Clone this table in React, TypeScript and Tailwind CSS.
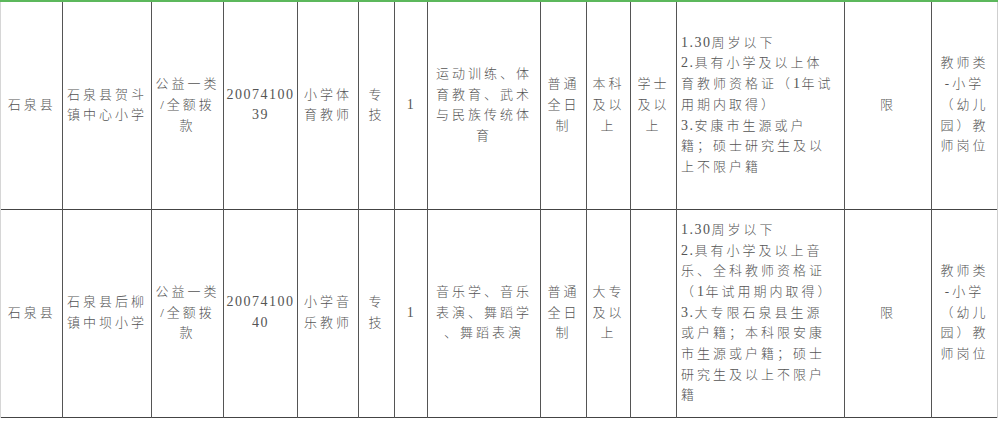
const widths = [61, 89, 72, 74, 61, 36, 33, 113, 46, 44, 46, 168, 87, 66];

type Cell = { lines: string[]; align?: "left" | "center" };

const rows: Cell[][] = [
  [
    { lines: ["石泉县"] },
    { lines: ["石泉县贺斗", "镇中心小学"] },
    { lines: ["公益一类", "/全额拨", "款"] },
    { lines: ["20074100", "39"] },
    { lines: ["小学体", "育教师"] },
    { lines: ["专", "技"] },
    { lines: ["1"] },
    { lines: ["运动训练、体", "育教育、武术", "与民族传统体", "育"] },
    { lines: ["普通", "全日", "制"] },
    { lines: ["本科", "及以", "上"] },
    { lines: ["学士", "及以", "上"] },
    {
      lines: [
        "1.30周岁以下",
        "2.具有小学及以上体",
        "育教师资格证（1年试",
        "用期内取得）",
        "3.安康市生源或户",
        "籍；硕士研究生及以",
        "上不限户籍",
      ],
      align: "left",
    },
    { lines: ["限"] },
    { lines: ["教师类", "-小学", "（幼儿", "园）教", "师岗位"] },
  ],
  [
    { lines: ["石泉县"] },
    { lines: ["石泉县后柳", "镇中坝小学"] },
    { lines: ["公益一类", "/全额拨", "款"] },
    { lines: ["20074100", "40"] },
    { lines: ["小学音", "乐教师"] },
    { lines: ["专", "技"] },
    { lines: ["1"] },
    { lines: ["音乐学、音乐", "表演、舞蹈学", "、舞蹈表演"] },
    { lines: ["普通", "全日", "制"] },
    { lines: ["大专", "及以", "上"] },
    { lines: [] },
    {
      lines: [
        "1.30周岁以下",
        "2.具有小学及以上音",
        "乐、全科教师资格证",
        "（1年试用期内取得）",
        "3.大专限石泉县生源",
        "或户籍；本科限安康",
        "市生源或户籍；硕士",
        "研究生及以上不限户",
        "籍",
      ],
      align: "left",
    },
    { lines: ["限"] },
    { lines: ["教师类", "-小学", "（幼儿", "园）教", "师岗位"] },
  ],
];

// digits and latin get tighter spacing than the CJK glyphs
function Line({ text }: { text: string }) {
  const parts = text.split(/([0-9.]+)/);
  return (
    <>
      {parts.map((p, i) =>
        /^[0-9.]+$/.test(p) ? (
          <span key={i} className="tracking-[1.5px] text-[14px] font-normal">
            {p}
          </span>
        ) : (
          <span key={i}>{p}</span>
        )
      )}
    </>
  );
}

export default function App() {
  return (
    <div className="w-[1000px] h-[421px] bg-white overflow-hidden">
      <table
        className="table-fixed border-collapse border-t-2 border-t-[#5cb85c] text-[13px] leading-[20.7px] tracking-[3px] text-[#555] font-light"
        style={{ width: 998 }}
      >
        <colgroup>
          <col style={{ width: 1 }} />
          {widths.map((w, i) => (
            <col key={i} style={{ width: w }} />
          ))}
        </colgroup>
        <tbody className="font-['Liberation_Serif','Noto_Sans_CJK_SC',serif]">
          {rows.map((row, r) => (
            <tr key={r} className="h-[208px] border-b border-b-[#444]">
              <td className="border-l border-l-[#d6d6d6] p-0" />
              {row.map((c, i) => (
                <td
                  key={i}
                  className={`p-0 align-middle whitespace-nowrap overflow-hidden border-r ${
                    i === widths.length - 1 ? "border-r-[#cfcfcf]" : "border-r-[#555]"
                  } ${c.align === "left" ? "text-left pl-[4px]" : "text-center"}`}
                >
                  {c.lines.map((l, k) => (
                    <div key={k}>
                      <Line text={l} />
                    </div>
                  ))}
                </td>
              ))}
            </tr>
          ))}
        </tbody>
      </table>
    </div>
  );
}
